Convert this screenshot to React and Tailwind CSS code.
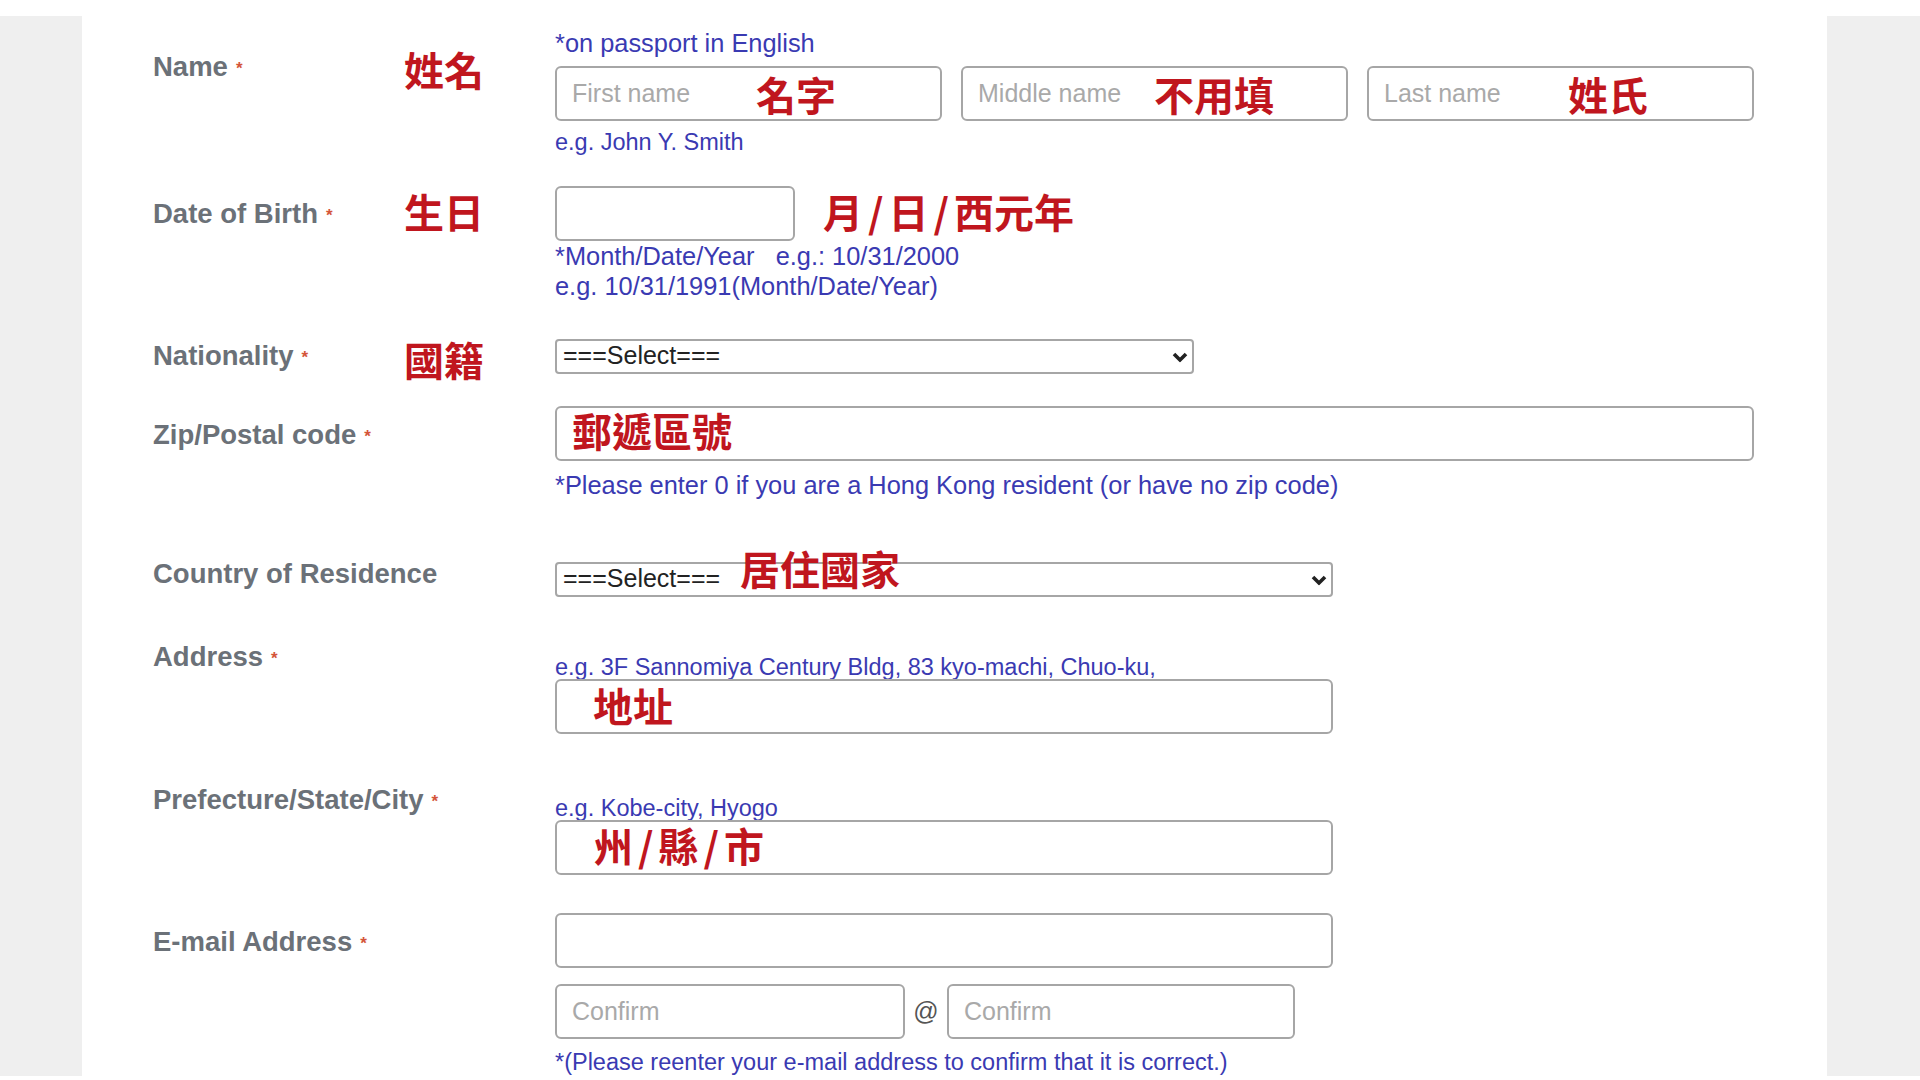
import React from "react";

const red = "font-['Noto_Sans_CJK_TC','Noto_Sans_CJK_SC',sans-serif] font-bold text-[40px] leading-[40px] text-[#c0161e] whitespace-nowrap";
const hint = "text-[23.5px] text-[#3a3ab2] whitespace-pre";
const hintLg = "text-[25.4px] text-[#3a3ab2] whitespace-pre";
const box = "h-[55px] rounded-[6px] border-2 border-[#a6a6a6] bg-white px-[15px] text-[25px] text-[#333] placeholder:text-[#a9a9a9] outline-none";

// label with optional required mark
function Label({ text, required = true, pt }) {
  return (
    <div className={`w-[322px] shrink-0 pl-[71px] ${pt}`}>
      <span className="text-[27.5px] leading-[34px] font-bold text-[#6b7178] whitespace-nowrap">
        {text}
        {required && (
          <span className="ml-[8px] align-middle text-[17px] text-[#d4553a]">*</span>
        )}
      </span>
    </div>
  );
}

function Anno({ text, pt }) {
  return (
    <div className={`w-[151px] shrink-0 ${pt}`}>
      {text && <span className={red}>{text}</span>}
    </div>
  );
}

// slash-separated red note, slashes a bit wider like the screenshot
function Slashed({ parts }) {
  return parts.map((p, i) => (
    <React.Fragment key={i}>
      {i > 0 && <span className="mx-[5px]">/</span>}
      {p}
    </React.Fragment>
  ));
}

function Chevron() {
  return (
    <svg
      className="pointer-events-none absolute right-[6px] top-1/2 -translate-y-1/2"
      width="16"
      height="11"
      viewBox="0 0 16 11"
    >
      <path d="M2 2.5 L8 8.5 L14 2.5" fill="none" stroke="#222" strokeWidth="3.6" />
    </svg>
  );
}

function Select({ width, children }) {
  return (
    <div className={`relative ${width}`}>
      <select className="h-[35px] w-full appearance-none rounded-[4px] border-2 border-[#a6a6a6] bg-white pb-[3px] pl-[6px] text-[25px] leading-[28px] text-[#222] outline-none">
        <option>===Select===</option>
      </select>
      <Chevron />
      {children}
    </div>
  );
}

function Overlay({ children, left, top }) {
  return (
    <span className={`pointer-events-none absolute ${left} ${top} ${red}`}>{children}</span>
  );
}

export default function App() {
  return (
    <div className="h-[1080px] overflow-hidden bg-white pt-[16px] font-['Liberation_Sans',Arial,sans-serif]">
      <div className="flex h-[1060px]">
        <div className="w-[82px] bg-[#efefef]" />
        <div className="w-[1745px] bg-white pt-[12px]">
          {/* Name */}
          <div className="flex h-[158px]">
            <Label text="Name" pt="pt-[22px]" />
            <Anno text="姓名" pt="pt-[21px]" />
            <div>
              <div className={`${hintLg} leading-[30px]`}>*on passport in English</div>
              <div className="mt-[8px] grid w-[1199px] grid-cols-3 gap-[19px]">
                <div className="relative">
                  <input className={`${box} w-full`} placeholder="First name" />
                  <Overlay left="left-[201px]" top="top-[8px]">名字</Overlay>
                </div>
                <div className="relative">
                  <input className={`${box} w-full`} placeholder="Middle name" />
                  <Overlay left="left-[193px]" top="top-[8px]">不用填</Overlay>
                </div>
                <div className="relative">
                  <input className={`${box} w-full`} placeholder="Last name" />
                  <Overlay left="left-[201px]" top="top-[8px]">姓氏</Overlay>
                </div>
              </div>
              <div className={`${hint} mt-[6px] leading-[30px]`}>e.g. John Y. Smith</div>
            </div>
          </div>

          {/* Date of Birth */}
          <div className="flex h-[151px]">
            <Label text="Date of Birth" pt="pt-[11px]" />
            <Anno text="生日" pt="pt-[5px]" />
            <div>
              <div className="flex items-center">
                <input className={`${box} w-[240px]`} />
                <span className={`${red} ml-[28px] mt-[-6px]`}>
                  <Slashed parts={["月", "日", "西元年"]} />
                </span>
              </div>
              <div className={`${hintLg} leading-[30px]`}>*Month/Date/Year   e.g.: 10/31/2000</div>
              <div className={`${hintLg} leading-[30px]`}>e.g. 10/31/1991(Month/Date/Year)</div>
            </div>
          </div>

          {/* Nationality */}
          <div className="flex h-[69px]">
            <Label text="Nationality" pt="pt-[2px]" />
            <Anno text="國籍" pt="pt-[2px]" />
            <div className="pt-[2px]">
              <Select width="w-[639px]" />
            </div>
          </div>

          {/* Zip */}
          <div className="flex h-[151px]">
            <Label text="Zip/Postal code" pt="pt-[12px]" />
            <Anno pt="" />
            <div>
              <div className="relative w-[1199px]">
                <input className={`${box} w-full`} />
                <Overlay left="left-[17px]" top="top-[4px]">郵遞區號</Overlay>
              </div>
              <div className={`${hintLg} mt-[9px] leading-[30px]`}>
                *Please enter 0 if you are a Hong Kong resident (or have no zip code)
              </div>
            </div>
          </div>

          {/* Country of Residence */}
          <div className="flex h-[83px]">
            <Label text="Country of Residence" required={false} pt="pt-0" />
            <Anno pt="" />
            <div className="pt-[5px]">
              <Select width="w-[778px]">
                <Overlay left="left-[185px]" top="top-[-14px]">居住國家</Overlay>
              </Select>
            </div>
          </div>

          {/* Address */}
          <div className="flex h-[143px]">
            <Label text="Address" pt="pt-0" />
            <Anno pt="" />
            <div className="pt-[15px]">
              <div className={`${hint} leading-[24px]`}>
                e.g. 3F Sannomiya Century Bldg, 83 kyo-machi, Chuo-ku,
              </div>
              <div className="relative w-[778px]">
                <input className={`${box} w-full`} />
                <Overlay left="left-[38px]" top="top-[6px]">地址</Overlay>
              </div>
            </div>
          </div>

          {/* Prefecture */}
          <div className="flex h-[130px]">
            <Label text="Prefecture/State/City" pt="pt-0" />
            <Anno pt="" />
            <div className="pt-[13px]">
              <div className={`${hint} leading-[24px]`}>e.g. Kobe-city, Hyogo</div>
              <div className="relative w-[778px]">
                <input className={`${box} w-full`} />
                <Overlay left="left-[38px]" top="top-[5px]">
                  <Slashed parts={["州", "縣", "市"]} />
                </Overlay>
              </div>
            </div>
          </div>

          {/* E-mail */}
          <div className="flex">
            <Label text="E-mail Address" pt="pt-[12px]" />
            <Anno pt="" />
            <div>
              <input className={`${box} w-[778px]`} />
              <div className="mt-[16px] flex items-center">
                <input className={`${box} w-[350px]`} placeholder="Confirm" />
                <span className="w-[42px] text-center text-[25px] text-[#555]">@</span>
                <input className={`${box} w-[348px]`} placeholder="Confirm" />
              </div>
              <div className={`${hint} mt-[8px] leading-[30px]`}>
                *(Please reenter your e-mail address to confirm that it is correct.)
              </div>
            </div>
          </div>
        </div>
        <div className="flex-1 bg-[#efefef]" />
      </div>
    </div>
  );
}
